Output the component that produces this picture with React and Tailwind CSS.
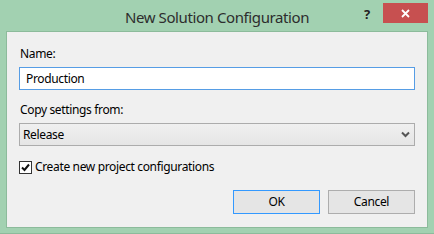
export default function App() {
  return (
    <div
      className="relative w-[434px] h-[234px] bg-[#a2d1b1] border-b border-[#8cbb9b] flex flex-col text-[#000]"
      style={{ fontFamily: '"Noto Sans", "Open Sans", sans-serif' }}
    >
      {/* title bar */}
      <div className="h-[31px] flex items-start justify-center pt-[8px]">
        <span className="text-[15px] leading-[18px] tracking-[-0.4px] text-[#2d2d2d]">New Solution Configuration</span>
      </div>
      <div className="absolute top-[3px] right-[6px] flex items-start">
        <span className="w-[18px] mr-[7px] mt-[4px] text-[13px] leading-[14px] font-bold text-[#222] text-center">?</span>
        <button className="w-[45px] h-[20px] bg-[#c75050] flex items-center justify-center">
          <svg width="9" height="9" viewBox="0 0 9 9">
            <path d="M1 1 L8 8 M8 1 L1 8" stroke="#fff" strokeWidth="1.8" />
          </svg>
        </button>
      </div>

      {/* client area */}
      <div className="ml-[6px] w-[422px] h-[197px] border border-[#8cbb9b] bg-[#f0f0f0] px-[12px] pt-[14px] flex flex-col text-[12px] leading-[16px] tracking-[-0.35px]">
        <label className="pl-[1px]">Name:</label>
        <div className="mt-[5px] h-[23px] border border-[#569de5] bg-white pl-[6px] flex items-center">
          Production
        </div>

        <label className="mt-[12px] pl-[1px]">Copy settings from:</label>
        <div className="mt-[5px] h-[23px] border border-[#acacac] bg-gradient-to-b from-[#f0f0f0] to-[#e5e5e5] pl-[3px] pr-[4px] flex items-center justify-between">
          <span>Release</span>
          <svg width="9" height="7" viewBox="0 0 9 7">
            <path d="M1 1.5 L4.5 5 L8 1.5" stroke="#555" strokeWidth="2" fill="none" />
          </svg>
        </div>

        <div className="mt-[13px] flex items-center">
          <div className="w-[13px] h-[13px] border border-[#333] bg-white flex items-center justify-center">
            <svg width="9" height="9" viewBox="0 0 9 9">
              <path d="M1 4.5 L3.5 7 L8 1.5" stroke="#111" strokeWidth="2" fill="none" />
            </svg>
          </div>
          <span className="ml-[3px]">Create new project configurations</span>
        </div>

        <div className="mt-[15px] flex justify-end gap-[8px]">
          <button className="w-[87px] h-[24px] border border-[#3399ff] bg-[#e5e5e5]">OK</button>
          <button className="w-[87px] h-[24px] border border-[#adadad] bg-[#e5e5e5]">Cancel</button>
        </div>
      </div>
    </div>
  );
}
